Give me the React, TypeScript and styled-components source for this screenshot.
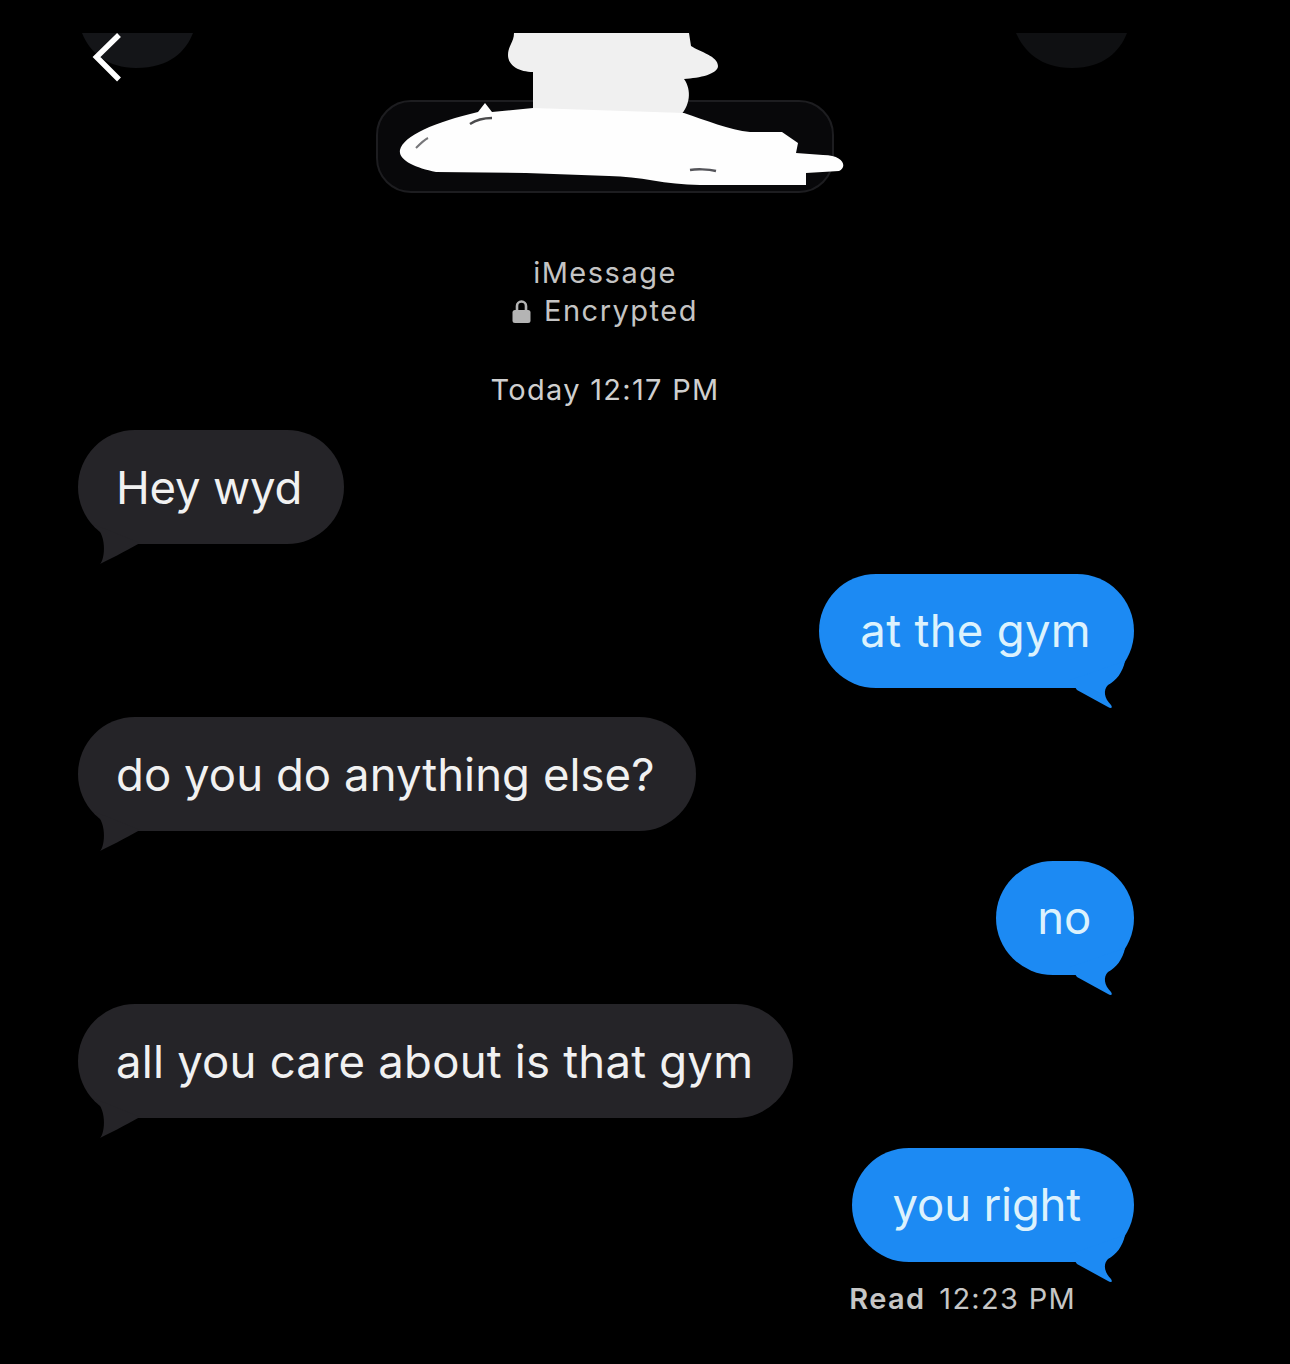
import styled, { createGlobalStyle } from 'styled-components';

const GlobalStyle = createGlobalStyle`
  html, body {
    margin: 0;
    padding: 0;
    background: #000;
  }
`;

const Page = styled.div`
  width: 1290px;
  height: 1364px;
  box-sizing: border-box;
  padding-top: 33px;
  background: #000;
  font-family: Inter, "Liberation Sans", sans-serif;
  overflow: hidden;
`;

const TopBar = styled.div`
  display: grid;
  grid-template-columns: 298px 636px 118px;
  padding-left: 78px;
  height: 160px;
  align-items: start;
`;

const Info = styled.div`
  display: flex;
  flex-direction: column;
  align-items: center;
  margin-top: 61px;
  padding-right: 80px;
  color: #c4c4c4;
  font-size: 29px;
  letter-spacing: 1.5px;
  line-height: 38px;
`;

const InfoRow = styled.div`
  display: flex;
  align-items: center;
  gap: 13px;
`;

const Stamp = styled.div`
  margin-top: 41px;
  color: #cfcfcf;
  font-size: 29px;
  letter-spacing: 1.3px;
  line-height: 38px;
`;

const Thread = styled.div`
  display: flex;
  flex-direction: column;
  gap: 29.5px;
  margin-top: 21px;
  padding: 0 156px 0 78px;
`;

const Bubble = styled.div<{ $mine?: boolean; $extraRight?: number; $spacing?: number }>`
  position: relative;
  box-sizing: border-box;
  align-self: ${p => (p.$mine ? 'flex-end' : 'flex-start')};
  height: 114px;
  padding: 0 ${p => (p.$mine ? 43 : 40) + (p.$extraRight ?? 0)}px 0 ${p => (p.$mine ? 41 : 38)}px;
  display: flex;
  align-items: center;
  border-radius: 57px;
  background: ${p => (p.$mine ? '#1c8af3' : '#252428')};
  color: ${p => (p.$mine ? '#dcf2fd' : '#f1f1f1')};
  font-size: 45.5px;
  letter-spacing: ${p => p.$spacing ?? -0.2}px;
  white-space: nowrap;
`;

const Tail = styled.svg<{ $mine?: boolean }>`
  position: absolute;
  top: 80px;
  ${p => (p.$mine ? 'right: -2px;' : 'left: 0;')}
  width: 70px;
  height: 60px;
`;

const ReadRow = styled.div`
  display: flex;
  justify-content: flex-end;
  gap: 14px;
  margin-top: -11.5px;
  padding-right: 58px;
  color: #c6c6c6;
  font-size: 29px;
  letter-spacing: 1.3px;
  line-height: 38px;
`;

const ReadLabel = styled.span`
  font-weight: 600;
`;

function BackCluster() {
  return (
    <svg width="122" height="50" viewBox="0 0 122 50">
      <path d="M4 0 H115 C108 18 92 35 58 35 C30 35 12 20 4 0 Z" fill="#141518" />
      <path d="M41 2 L18.5 24 L41 46.5" fill="none" stroke="#fff" strokeWidth="5.5" />
    </svg>
  );
}

function Redaction() {
  return (
    <svg width="469" height="160" viewBox="376 33 469 160">
      <rect x="377" y="101" width="456" height="91" rx="34" fill="#08080a" stroke="#1d1d20" strokeWidth="2" />
      <path
        d="M514 33 H689 L691 46 C700 52 718 56 718 66 C718 74 700 78 684 79 C692 90 690 106 680 116 L533 116 L533 72 C520 72 508 66 508 55 C508 46 514 42 514 33 Z"
        fill="#f0f0f0"
      />
      <path
        d="M485 103 L492 112 L533 108 L684 113 C705 120 730 130 750 132 L782 132 L798 143 L796 153 L823 155 C845 155 847 168 839 171 L806 173 L806 185 L700 185 C665 185 640 176 609 176 L526 173 L436 172 C415 168 398 160 400 150 C403 136 435 122 478 112 Z"
        fill="#fefefe"
      />
      <path d="M470 124 C476 120 484 118 492 118" fill="none" stroke="#4a4a4c" strokeWidth="2.5" />
      <path d="M416 148 C420 144 424 140 428 138" fill="none" stroke="#77777a" strokeWidth="2" />
      <path d="M690 170 C696 169 708 169 716 171" fill="none" stroke="#55555a" strokeWidth="2.5" />
    </svg>
  );
}

function RightAvatar() {
  return (
    <svg width="118" height="40" viewBox="0 0 118 40">
      <path d="M4 0 H115 C108 18 92 35 60 35 C28 35 12 18 4 0 Z" fill="#0f1012" />
    </svg>
  );
}

function Lock() {
  return (
    <svg width="19" height="24" viewBox="0 0 19 24">
      <path d="M5 12 V7 a4.5 4.5 0 0 1 9 0 V12" fill="none" stroke="#b4b4b4" strokeWidth="2.6" />
      <rect x="0.5" y="11" width="18" height="13" rx="2.5" fill="#b4b4b4" />
    </svg>
  );
}

function TailShape({ mine }: { mine?: boolean }) {
  return mine ? (
    <Tail $mine viewBox="0 0 70 60">
      <path d="M59 7 C57 18 50 27 42 31 C37 36 38 44 45 51 C47 54 45 55 42 53 L11 36 L4 26 Z" fill="#1c8af3" />
    </Tail>
  ) : (
    <Tail viewBox="0 0 70 60">
      <path d="M14 14 C30 22 27 50 22 54 C30 50 46 42 62 33 L30 20 Z" fill="#252428" />
    </Tail>
  );
}

type MessageProps = { text: string; mine?: boolean; extraRight?: number; spacing?: number };

function Message({ text, mine, extraRight, spacing }: MessageProps) {
  return (
    <Bubble $mine={mine} $extraRight={extraRight} $spacing={spacing}>
      {text}
      <TailShape mine={mine} />
    </Bubble>
  );
}

export default function App() {
  return (
    <Page>
      <GlobalStyle />
      <TopBar>
        <BackCluster />
        <Redaction />
        <RightAvatar />
      </TopBar>
      <Info>
        <div>iMessage</div>
        <InfoRow>
          <Lock />
          <span>Encrypted</span>
        </InfoRow>
        <Stamp>Today 12:17 PM</Stamp>
      </Info>
      <Thread>
        <Message text="Hey wyd" extraRight={2} />
        <Message text="at the gym" mine spacing={0.3} />
        <Message text="do you do anything else?" spacing={0.05} extraRight={1} />
        <Message text="no" mine />
        <Message text="all you care about is that gym" spacing={0.2} />
        <Message text="you right" mine extraRight={10} />
        <ReadRow>
          <ReadLabel>Read</ReadLabel>
          <span>12:23 PM</span>
        </ReadRow>
      </Thread>
    </Page>
  );
}
